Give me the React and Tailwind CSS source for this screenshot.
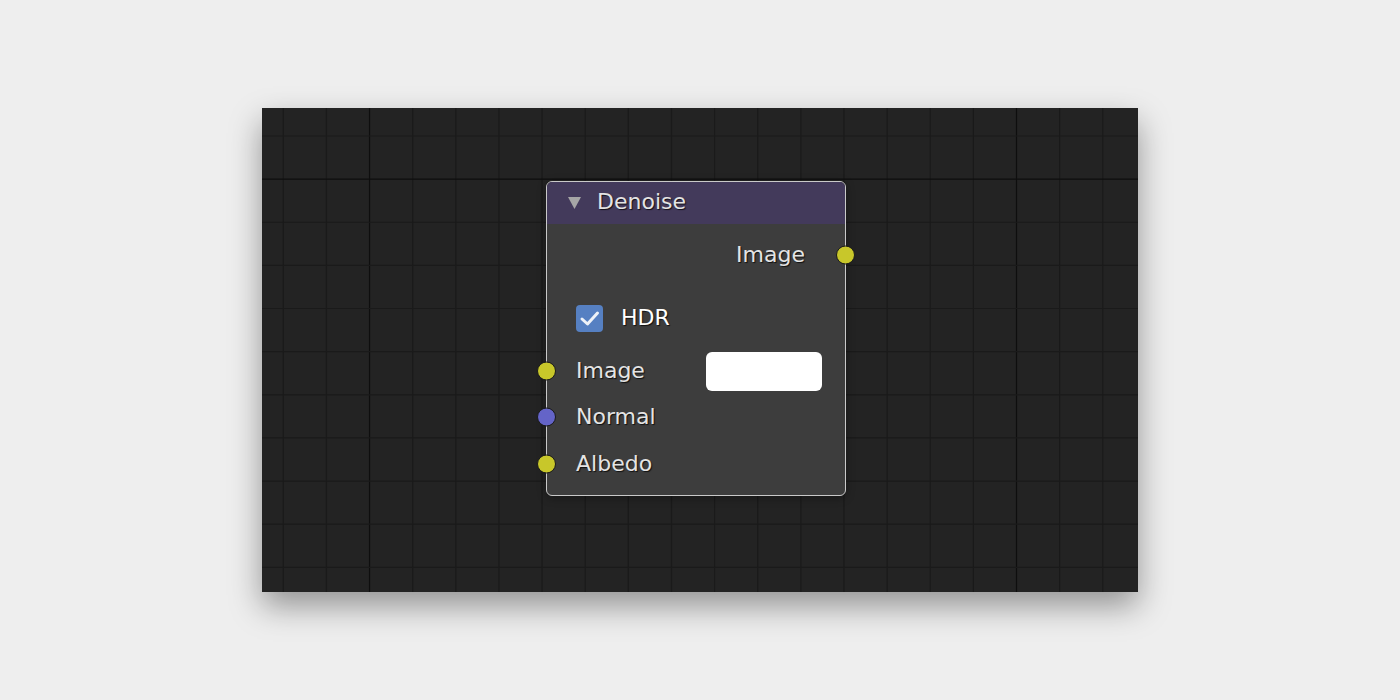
import React from 'react';

const STEP = 43.13;
const vLines = Array.from({ length: 20 }, (_, k) => 21.3 + k * STEP);
const hLines = Array.from({ length: 11 }, (_, k) => 28 + k * STEP);

function Grid() {
  return (
    <svg className="absolute inset-0" width="876" height="484" viewBox="0 0 876 484">
      {vLines.map((x, k) => (
        <line
          key={'v' + k}
          x1={x}
          x2={x}
          y1="0"
          y2="484"
          stroke={k === 2 || k === 17 ? '#0e0e0e' : '#1a1a1a'}
          strokeWidth="1.2"
        />
      ))}
      {hLines.map((y, k) => (
        <line
          key={'h' + k}
          x1="0"
          x2="876"
          y1={y}
          y2={y}
          stroke={k === 1 ? '#0e0e0e' : '#1a1a1a'}
          strokeWidth="1.2"
        />
      ))}
    </svg>
  );
}

function Socket({ color, side }) {
  return (
    <span
      className={`absolute top-1/2 -translate-y-1/2 h-[19px] w-[19px] rounded-full border border-[#1a1a1a] ${color} ${
        side === 'right' ? 'right-[-10px]' : 'left-[-10px]'
      }`}
    />
  );
}

const label = 'text-[22px] leading-none text-[#e4e4e4] [text-shadow:1px_1px_1px_rgba(0,0,0,0.75)]';

export default function App() {
  return (
    <div className="h-[700px] w-full bg-[#eeeeee] flex items-center justify-center font-['DejaVu_Sans',sans-serif]">
      <div className="relative w-[876px] h-[484px] bg-[#232323] shadow-[0_14px_30px_rgba(0,0,0,0.38)]">
        <Grid />

        {/* node */}
        <div className="absolute left-[284px] top-[73px] w-[300px] h-[315px] rounded-[6px] border border-[#c9c9c9] bg-[#3d3d3d] flex flex-col shadow-[0_2px_8px_rgba(0,0,0,0.35)]">
          <div className="h-[42px] shrink-0 rounded-t-[5px] bg-[#433a5b] flex items-center pl-[21px] pb-[3px] gap-[16px]">
            <svg width="13" height="12" viewBox="0 0 13 12" className="mt-[2px]">
              <polygon points="0,0 13,0 6.5,12" fill="#a6a6a6" />
            </svg>
            <span className={label}>Denoise</span>
          </div>

          <div className="relative mt-[11px] h-[40px] flex items-center justify-end pr-[40px]">
            <span className={label}>Image</span>
            <Socket color="bg-[#c8c72a]" side="right" />
          </div>

          <div className="mt-[23px] h-[40px] flex items-center pl-[29px] gap-[18px]">
            <span className="h-[27px] w-[27px] rounded-[4px] bg-[#5680c2] flex items-center justify-center">
              <svg width="21" height="17" viewBox="0 0 21 17">
                <path d="M3 9 L8.5 14 L18.5 3" fill="none" stroke="#eef2f8" strokeWidth="3" strokeLinecap="round" strokeLinejoin="round" />
              </svg>
            </span>
            <span className="text-[22px] leading-none text-white [text-shadow:1px_1px_1px_rgba(0,0,0,0.75)]">HDR</span>
          </div>

          <div className="relative mt-[13px] h-[40px] flex items-center justify-between pl-[29px] pr-[23px]">
            <Socket color="bg-[#c8c72a]" side="left" />
            <span className={label}>Image</span>
            <span className="h-[39px] w-[116px] rounded-[6px] bg-white" />
          </div>

          <div className="relative mt-[6px] h-[40px] flex items-center pl-[29px]">
            <Socket color="bg-[#6464c8]" side="left" />
            <span className={label}>Normal</span>
          </div>

          <div className="relative mt-[7px] h-[40px] flex items-center pl-[29px]">
            <Socket color="bg-[#c8c72a]" side="left" />
            <span className={label}>Albedo</span>
          </div>
        </div>
      </div>
    </div>
  );
}
